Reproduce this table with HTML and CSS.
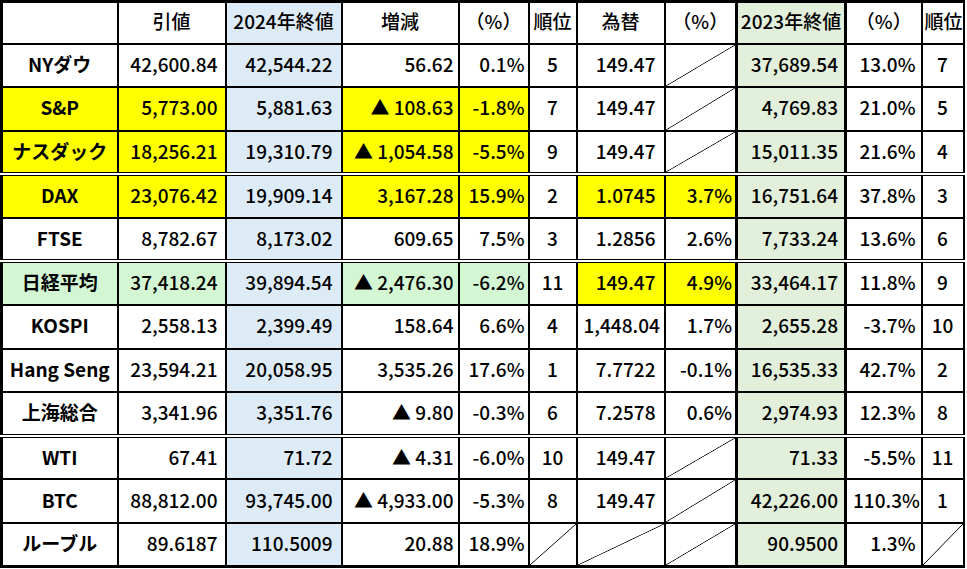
FILE: index.html
```html
<!DOCTYPE html>
<html lang="ja">
<head>
<meta charset="utf-8">
<title>指数一覧</title>
<link rel="stylesheet" href="styles.css">
</head>
<body>
<table class="quotes">
  <colgroup>
    <col class="w-name"><col class="w-c2"><col class="w-c3"><col class="w-c4"><col class="w-c5"><col class="w-c6"><col class="w-c7"><col class="w-c8"><col class="w-c9"><col class="w-c10"><col class="w-c11">
  </colgroup>
  <thead>
    <tr>
      <th></th><th>引値</th><th class="blue">2024年終値</th><th>増減</th><th>（%）</th><th>順位</th><th>為替</th><th>（%）</th><th class="green">2023年終値</th><th>（%）</th><th>順位</th>
    </tr>
  </thead>
  <tbody>
    <tr>
      <td class="name">NYダウ</td><td class="c2">42,600.84</td><td class="c3 blue">42,544.22</td><td class="c4">56.62</td><td class="c5">0.1%</td><td class="rank">5</td><td class="c7">149.47</td><td class="diag"></td><td class="c9 green">37,689.54</td><td class="c10">13.0%</td><td class="rank">7</td>
    </tr>
    <tr>
      <td class="name yellow">S&amp;P</td><td class="c2 yellow">5,773.00</td><td class="c3 blue">5,881.63</td><td class="c4 yellow">▲ 108.63</td><td class="c5 yellow">-1.8%</td><td class="rank">7</td><td class="c7">149.47</td><td class="diag"></td><td class="c9 green">4,769.83</td><td class="c10">21.0%</td><td class="rank">5</td>
    </tr>
    <tr class="sep">
      <td class="name yellow">ナスダック</td><td class="c2 yellow">18,256.21</td><td class="c3 blue">19,310.79</td><td class="c4 yellow">▲ 1,054.58</td><td class="c5 yellow">-5.5%</td><td class="rank">9</td><td class="c7">149.47</td><td class="diag"></td><td class="c9 green">15,011.35</td><td class="c10">21.6%</td><td class="rank">4</td>
    </tr>
    <tr>
      <td class="name yellow">DAX</td><td class="c2 yellow">23,076.42</td><td class="c3 blue">19,909.14</td><td class="c4 yellow">3,167.28</td><td class="c5 yellow">15.9%</td><td class="rank">2</td><td class="c7 yellow">1.0745</td><td class="c8 yellow">3.7%</td><td class="c9 green">16,751.64</td><td class="c10">37.8%</td><td class="rank">3</td>
    </tr>
    <tr class="sep">
      <td class="name">FTSE</td><td class="c2">8,782.67</td><td class="c3 blue">8,173.02</td><td class="c4">609.65</td><td class="c5">7.5%</td><td class="rank">3</td><td class="c7">1.2856</td><td class="c8">2.6%</td><td class="c9 green">7,733.24</td><td class="c10">13.6%</td><td class="rank">6</td>
    </tr>
    <tr>
      <td class="name mint">日経平均</td><td class="c2 mint">37,418.24</td><td class="c3 blue">39,894.54</td><td class="c4 mint">▲ 2,476.30</td><td class="c5 mint">-6.2%</td><td class="rank">11</td><td class="c7 yellow">149.47</td><td class="c8 yellow">4.9%</td><td class="c9 green">33,464.17</td><td class="c10">11.8%</td><td class="rank">9</td>
    </tr>
    <tr>
      <td class="name">KOSPI</td><td class="c2">2,558.13</td><td class="c3 blue">2,399.49</td><td class="c4">158.64</td><td class="c5">6.6%</td><td class="rank">4</td><td class="c7">1,448.04</td><td class="c8">1.7%</td><td class="c9 green">2,655.28</td><td class="c10">-3.7%</td><td class="rank">10</td>
    </tr>
    <tr>
      <td class="name">Hang Seng</td><td class="c2">23,594.21</td><td class="c3 blue">20,058.95</td><td class="c4">3,535.26</td><td class="c5">17.6%</td><td class="rank">1</td><td class="c7">7.7722</td><td class="c8">-0.1%</td><td class="c9 green">16,535.33</td><td class="c10">42.7%</td><td class="rank">2</td>
    </tr>
    <tr class="sep">
      <td class="name">上海総合</td><td class="c2">3,341.96</td><td class="c3 blue">3,351.76</td><td class="c4">▲ 9.80</td><td class="c5">-0.3%</td><td class="rank">6</td><td class="c7">7.2578</td><td class="c8">0.6%</td><td class="c9 green">2,974.93</td><td class="c10">12.3%</td><td class="rank">8</td>
    </tr>
    <tr>
      <td class="name">WTI</td><td class="c2">67.41</td><td class="c3 blue">71.72</td><td class="c4">▲ 4.31</td><td class="c5">-6.0%</td><td class="rank">10</td><td class="c7">149.47</td><td class="diag"></td><td class="c9 green">71.33</td><td class="c10">-5.5%</td><td class="rank">11</td>
    </tr>
    <tr>
      <td class="name">BTC</td><td class="c2">88,812.00</td><td class="c3 blue">93,745.00</td><td class="c4">▲ 4,933.00</td><td class="c5">-5.3%</td><td class="rank">8</td><td class="c7">149.47</td><td class="diag"></td><td class="c9 green">42,226.00</td><td class="c10">110.3%</td><td class="rank">1</td>
    </tr>
    <tr>
      <td class="name">ルーブル</td><td class="c2">89.6187</td><td class="c3 blue">110.5009</td><td class="c4">20.88</td><td class="c5">18.9%</td><td class="diag"></td><td class="diag"></td><td class="diag"></td><td class="c9 green">90.9500</td><td class="c10">1.3%</td><td class="diag"></td>
    </tr>
  </tbody>
</table>
</body>
</html>
```
FILE: styles.css
```css
body {
  margin: 0;
  background: #ffffff;
  font-family: "Noto Sans CJK JP", "Noto Sans", sans-serif;
  color: #000;
}

.quotes {
  border-collapse: collapse;
  table-layout: fixed;
  width: 964px;
  border-top: 3px solid #000;
  border-left: 3px solid #000;
  border-bottom: 3px solid #000;
  border-right: 2px solid #000;
}

.w-name { width: 116px; }
.w-c2 { width: 108px; }
.w-c3 { width: 116px; }
.w-c4 { width: 117px; }
.w-c5 { width: 70px; }
.w-c6 { width: 48px; }
.w-c7 { width: 88px; }
.w-c8 { width: 72px; }
.w-c9 { width: 109px; }
.w-c10 { width: 76px; }
.w-c11 { width: 42px; }

.quotes thead tr {
  height: 42px;
}

.quotes tbody tr {
  height: 43.6px;
}

.quotes th,
.quotes td {
  border: 2px solid #000;
  padding: 0 6px 2px;
  font-size: 19px;
  font-weight: 500;
  line-height: 1.2;
  white-space: nowrap;
  overflow: hidden;
  text-align: right;
}

.quotes th {
  text-align: center;
  padding: 0 2px 2px;
}

.quotes th.green,
.quotes td.c9 {
  border-left: 3px solid #000;
  border-right: 3px solid #000;
}

.quotes tr.sep td {
  border-bottom: 4px double #000;
}

.quotes td.name {
  text-align: center;
  font-weight: 700;
  padding-left: 2px;
  padding-right: 2px;
}

.quotes td.rank {
  text-align: center;
  padding-left: 2px;
  padding-right: 2px;
}

.quotes td.c2 { padding-right: 7px; }
.quotes td.c3 { padding-right: 8px; }
.quotes td.c4 { padding-right: 4px; }
.quotes td.c5 { padding-right: 3px; }
.quotes td.c7 { padding-right: 8px; }
.quotes td.c8 { padding-right: 3px; }
.quotes td.c9 { padding-right: 6px; }
.quotes td.c10 { padding-right: 5px; }

.yellow { background: #ffff00; }
.blue { background: #ddebf7; }
.green { background: #e2efda; }
.mint { background: #d3f6d3; }

.quotes td.diag {
  background: linear-gradient(to bottom right, transparent calc(50% - 0.7px), #000 50%, transparent calc(50% + 0.7px));
}
```
